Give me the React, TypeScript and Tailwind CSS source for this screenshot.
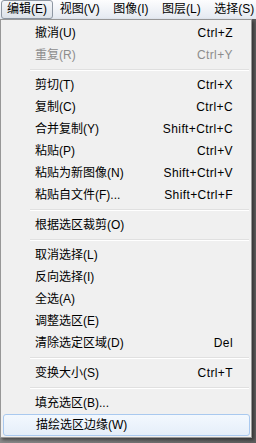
type MenuEntry =
  | { kind: 'item'; label: string; shortcut?: string; disabled?: boolean; active?: boolean }
  | { kind: 'sep' }

const menuBar = ['编辑(E)', '视图(V)', '图像(I)', '图层(L)', '选择(S)']

const entries: MenuEntry[] = [
  { kind: 'item', label: '撤消(U)', shortcut: 'Ctrl+Z' },
  { kind: 'item', label: '重复(R)', shortcut: 'Ctrl+Y', disabled: true },
  { kind: 'sep' },
  { kind: 'item', label: '剪切(T)', shortcut: 'Ctrl+X' },
  { kind: 'item', label: '复制(C)', shortcut: 'Ctrl+C' },
  { kind: 'item', label: '合并复制(Y)', shortcut: 'Shift+Ctrl+C' },
  { kind: 'item', label: '粘贴(P)', shortcut: 'Ctrl+V' },
  { kind: 'item', label: '粘贴为新图像(N)', shortcut: 'Shift+Ctrl+V' },
  { kind: 'item', label: '粘贴自文件(F)...', shortcut: 'Shift+Ctrl+F' },
  { kind: 'sep' },
  { kind: 'item', label: '根据选区裁剪(O)' },
  { kind: 'sep' },
  { kind: 'item', label: '取消选择(L)' },
  { kind: 'item', label: '反向选择(I)' },
  { kind: 'item', label: '全选(A)' },
  { kind: 'item', label: '调整选区(E)' },
  { kind: 'item', label: '清除选定区域(D)', shortcut: 'Del' },
  { kind: 'sep' },
  { kind: 'item', label: '变换大小(S)', shortcut: 'Ctrl+T' },
  { kind: 'sep' },
  { kind: 'item', label: '填充选区(B)...' },
  { kind: 'item', label: '描绘选区边缘(W)', active: true },
]

function MenuBar() {
  return (
    <div className="flex h-[19px] shrink-0 items-stretch whitespace-nowrap bg-gradient-to-b from-[#fdfdfe] to-[#e4e9f1]">
      {menuBar.map((name, i) =>
        i === 0 ? (
          <div
            key={name}
            className="ml-[1px] flex shrink-0 items-center rounded-[3px] border border-[#8e97a3] bg-gradient-to-b from-[#f4f6f9] to-[#dde2e9] px-[5px] leading-[17px]"
          >
            {name}
          </div>
        ) : (
          <div key={name} className="flex shrink-0 items-center px-[6.75px] leading-[19px]">
            {name}
          </div>
        ),
      )}
    </div>
  )
}

function App() {
  return (
    <div className="flex h-[443px] w-[256px] flex-col overflow-hidden bg-[#f0f0f0] font-['Liberation_Sans','Noto_Sans_CJK_SC',sans-serif] text-[12px] text-black">
      <MenuBar />
      <div className="flex-1 bg-gradient-to-r from-[#8a8a8a] to-[#5e5e5e]">
        <div className="w-[252px] border border-[#979797] bg-[#f0f0f0] pt-[2px] pb-[1px] shadow-[2px_2px_3px_rgba(0,0,0,0.45)]">
          {entries.map((entry, i) =>
            entry.kind === 'sep' ? (
              <div key={i} className="flex h-[8px] flex-col pt-[3px] pl-[29px] pr-[2px]">
                <div className="h-[1px] bg-[#e0e0e0]" />
                <div className="h-[1px] bg-white" />
              </div>
            ) : (
              <div
                key={i}
                className={
                  entry.active
                    ? 'ml-[2px] mr-[1px] flex h-[22px] items-center justify-between whitespace-nowrap rounded-[3px] border border-[#a9c9ef] bg-gradient-to-b from-[#f3f8fe] to-[#e5eef9] pl-[32px] pr-[16px]'
                    : 'flex h-[22px] items-center justify-between whitespace-nowrap pl-[34px] pr-[18px]'
                }
              >
                <span className={entry.disabled ? 'text-[#8d8d8d]' : ''}>{entry.label}</span>
                {entry.shortcut ? (
                  <span className={entry.disabled ? 'tracking-[0.4px] text-[#8d8d8d]' : 'tracking-[0.4px]'}>
                    {entry.shortcut}
                  </span>
                ) : null}
              </div>
            ),
          )}
        </div>
      </div>
    </div>
  )
}

export default App
